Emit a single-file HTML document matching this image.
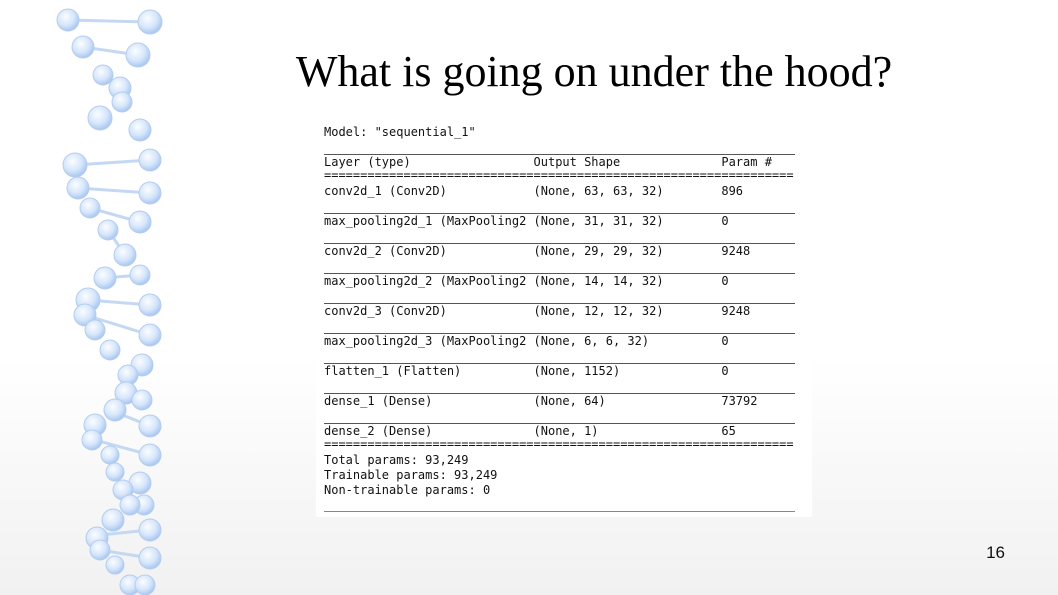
<!DOCTYPE html>
<html><head><style>
body{margin:0;width:1058px;height:595px;overflow:hidden;position:relative;background:linear-gradient(#fff 0%,#fff 60%,#f1f1f1 100%);}
.t{position:absolute;left:0;width:1058px;text-align:center;top:46px;font:44px "Liberation Serif",serif;color:#000;padding-left:130px;box-sizing:border-box}
.box{position:absolute;left:316px;top:120px;width:496px;height:397px;background:#fff}
.m{position:absolute;left:324px;font:12px "DejaVu Sans Mono",monospace;color:#111;white-space:pre;line-height:15px}
.l{position:absolute;left:324px;width:471px;height:1px;background:#555}
.n{position:absolute;right:53px;top:543px;font:17px "Liberation Sans",sans-serif;color:#111}
</style></head><body>
<svg width="200" height="595" style="position:absolute;left:0;top:0">
<defs><radialGradient id="g" cx="40%" cy="35%" r="65%"><stop offset="0" stop-color="#fbfdff"/><stop offset="0.6" stop-color="#d6e6fb"/><stop offset="1" stop-color="#a9c7f0"/></radialGradient></defs>
<g stroke="#c4d8f4" stroke-width="3">
<line x1="68" y1="20" x2="150" y2="22"/><line x1="83" y1="47" x2="138" y2="55"/><line x1="75" y1="165" x2="150" y2="160"/><line x1="78" y1="188" x2="150" y2="193"/><line x1="90" y1="208" x2="140" y2="222"/><line x1="105" y1="278" x2="140" y2="275"/><line x1="88" y1="300" x2="150" y2="305"/><line x1="85" y1="315" x2="150" y2="335"/><line x1="110" y1="410" x2="150" y2="426"/><line x1="95" y1="440" x2="150" y2="455"/><line x1="100" y1="535" x2="150" y2="530"/><line x1="100" y1="550" x2="150" y2="558"/><line x1="103" y1="75" x2="120" y2="88"/><line x1="108" y1="230" x2="125" y2="255"/>
</g>
<g fill="url(#g)" stroke="#b5cdef" stroke-width="1">
<circle cx="68" cy="20" r="11"/><circle cx="150" cy="22" r="12"/><circle cx="83" cy="47" r="11"/><circle cx="138" cy="55" r="12"/>
<circle cx="103" cy="75" r="10"/><circle cx="120" cy="88" r="11"/><circle cx="122" cy="102" r="10"/><circle cx="100" cy="118" r="12"/><circle cx="140" cy="130" r="11"/>
<circle cx="75" cy="165" r="12"/><circle cx="150" cy="160" r="11"/><circle cx="78" cy="188" r="11"/><circle cx="150" cy="193" r="11"/><circle cx="90" cy="208" r="10"/><circle cx="140" cy="222" r="11"/>
<circle cx="108" cy="230" r="10"/><circle cx="125" cy="255" r="11"/><circle cx="105" cy="278" r="11"/><circle cx="140" cy="275" r="10"/>
<circle cx="88" cy="300" r="12"/><circle cx="150" cy="305" r="11"/><circle cx="85" cy="315" r="11"/><circle cx="150" cy="335" r="11"/><circle cx="95" cy="330" r="10"/><circle cx="110" cy="350" r="10"/><circle cx="142" cy="365" r="11"/><circle cx="128" cy="375" r="10"/><circle cx="126" cy="393" r="11"/><circle cx="142" cy="400" r="10"/><circle cx="115" cy="410" r="11"/>
<circle cx="95" cy="425" r="11"/><circle cx="150" cy="426" r="11"/><circle cx="92" cy="440" r="10"/><circle cx="150" cy="455" r="11"/><circle cx="110" cy="455" r="9"/><circle cx="115" cy="472" r="9"/><circle cx="140" cy="483" r="11"/><circle cx="123" cy="490" r="10"/><circle cx="144" cy="505" r="10"/><circle cx="130" cy="505" r="10"/><circle cx="113" cy="520" r="11"/>
<circle cx="97" cy="538" r="11"/><circle cx="150" cy="530" r="11"/><circle cx="100" cy="550" r="10"/><circle cx="150" cy="558" r="11"/><circle cx="115" cy="565" r="9"/><circle cx="130" cy="585" r="10"/><circle cx="145" cy="585" r="10"/>
</g></svg>
<div class="t">What is going on under the hood?</div>
<div class="box"></div>
<div class="m" style="top:125px">Model: "sequential_1"</div>
<div class="l" style="top:154px"></div>
<div class="m" style="top:155px">Layer (type)                 Output Shape              Param #</div>
<div class="m" style="top:168px">=================================================================</div>
<div class="m" style="top:184px">conv2d_1 (Conv2D)            (None, 63, 63, 32)        896</div>
<div class="l" style="top:213px"></div>
<div class="m" style="top:214px">max_pooling2d_1 (MaxPooling2 (None, 31, 31, 32)        0</div>
<div class="l" style="top:243px"></div>
<div class="m" style="top:244px">conv2d_2 (Conv2D)            (None, 29, 29, 32)        9248</div>
<div class="l" style="top:273px"></div>
<div class="m" style="top:274px">max_pooling2d_2 (MaxPooling2 (None, 14, 14, 32)        0</div>
<div class="l" style="top:303px"></div>
<div class="m" style="top:304px">conv2d_3 (Conv2D)            (None, 12, 12, 32)        9248</div>
<div class="l" style="top:333px"></div>
<div class="m" style="top:334px">max_pooling2d_3 (MaxPooling2 (None, 6, 6, 32)          0</div>
<div class="l" style="top:363px"></div>
<div class="m" style="top:364px">flatten_1 (Flatten)          (None, 1152)              0</div>
<div class="l" style="top:393px"></div>
<div class="m" style="top:394px">dense_1 (Dense)              (None, 64)                73792</div>
<div class="l" style="top:423px"></div>
<div class="m" style="top:424px">dense_2 (Dense)              (None, 1)                 65</div>
<div class="m" style="top:437px">=================================================================</div>
<div class="m" style="top:453px">Total params: 93,249
Trainable params: 93,249
Non-trainable params: 0</div>
<div class="l" style="top:511px;background:#888"></div>
<div class="n">16</div>
</body></html>
